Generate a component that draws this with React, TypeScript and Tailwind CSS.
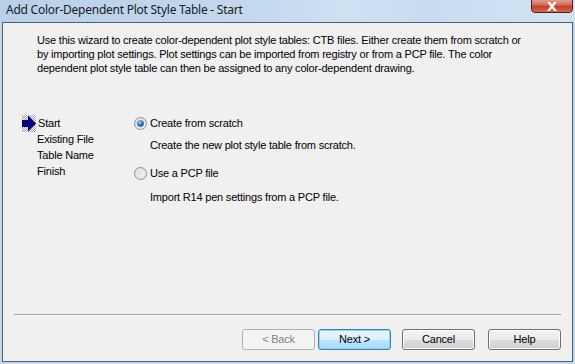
import React from "react";

function Radio({ checked }: { checked: boolean }) {
  return (
    <svg width="13" height="13" viewBox="0 0 13 13" className="shrink-0">
      <defs>
        <linearGradient id={checked ? "rg1" : "rg2"} x1="0" y1="0" x2="1" y2="1">
          <stop offset="0" stopColor="#d8d8d8" />
          <stop offset="1" stopColor="#f8f8f8" />
        </linearGradient>
        <radialGradient id="dot" cx="0.4" cy="0.35" r="0.7">
          <stop offset="0" stopColor="#a9e4fb" />
          <stop offset="0.45" stopColor="#2a8ad4" />
          <stop offset="1" stopColor="#0b3e74" />
        </radialGradient>
      </defs>
      <circle cx="6.5" cy="6.5" r="6" fill={`url(#${checked ? "rg1" : "rg2"})`} stroke="#8e8f8f" strokeWidth="1" />
      <circle cx="6.5" cy="6.5" r="4.3" fill="none" stroke="#e6e6e6" strokeWidth="1" />
      {checked && <circle cx="6.5" cy="6.5" r="3.3" fill="url(#dot)" />}
    </svg>
  );
}

function Arrow() {
  return (
    <svg width="15" height="17" viewBox="0 0 15 17" className="shrink-0">
      <defs>
        <pattern id="dith" width="2" height="2" patternUnits="userSpaceOnUse">
          <rect width="2" height="2" fill="#ffffff" />
          <rect width="1" height="1" fill="#a0a0a0" />
          <rect x="1" y="1" width="1" height="1" fill="#a0a0a0" />
        </pattern>
      </defs>
      <rect x="0" y="0" width="14" height="17" fill="url(#dith)" />
      <polygon points="0,5 6,5 6,0.5 14,8.5 6,16.5 6,12 0,12" fill="#000080" />
    </svg>
  );
}

function Btn({ label, kind }: { label: string; kind?: "disabled" | "default" }) {
  const base =
    "w-[73px] h-[21px] rounded-[3px] flex items-center justify-center text-[11px] border";
  if (kind === "disabled")
    return (
      <div className={`${base} border-[#adb2b5] bg-[#f4f4f4] text-[#838383]`}>{label}</div>
    );
  if (kind === "default")
    return (
      <div className={`${base} border-[#3c7fb1] bg-[linear-gradient(#eaf6fd_0%,#d9f0fc_50%,#bee6fd_51%,#a7d9f5_100%)] text-black shadow-[inset_0_0_0_1px_#8fd3f5]`}>
        {label}
      </div>
    );
  return (
    <div className={`${base} border-[#707070] bg-[linear-gradient(#f2f2f2_0%,#ebebeb_50%,#dddddd_51%,#cfcfcf_100%)] text-black shadow-[inset_0_0_0_1px_#fcfcfc]`}>
      {label}
    </div>
  );
}

export default function App() {
  return (
    <div
      className="w-[575px] h-[364px] relative overflow-hidden bg-[#c3d7ed] flex flex-col"
      style={{ fontFamily: '"Liberation Sans", Arial, sans-serif' }}
    >
      <div className="h-[22px] shrink-0 flex items-center pl-[6px] bg-[linear-gradient(90deg,#b9d0e9_0%,#c4d8ee_45%,#cfe0f1_60%,#c9dcef_75%,#d3e3f3_100%)]">
        <span
          className="text-[12px] text-[#1b1b1b] mt-[-2px] tracking-[-0.25px]"
          style={{ fontFamily: '"Noto Sans", "Open Sans", sans-serif' }}
        >
          Add Color-Dependent Plot Style Table - Start
        </span>
      </div>
      <div className="absolute left-[531px] top-[-2px] w-[42px] h-[15px] rounded-b-[4px] border border-[#5a1e16] bg-[linear-gradient(#e8a493_0%,#d0705c_45%,#c0412a_55%,#d06a4e_100%)] flex items-center justify-center">
        <span className="text-white text-[13px] font-bold leading-none mt-[1px]" style={{ fontFamily: '"DejaVu Sans", sans-serif' }}>
          X
        </span>
      </div>
      <div className="ml-[2px] w-[571px] h-[340px] border border-[#4f5e70] bg-[#f0f0f0] flex flex-col text-[11px] text-black tracking-[-0.2px]">
        <div className="pl-[34px] pt-[10px] leading-[14px] whitespace-nowrap">
          <div>Use this wizard to create color-dependent plot style tables: CTB files. Either create them from scratch or</div>
          <div>by importing plot settings. Plot settings can be imported from registry or from a PCP file. The color</div>
          <div>dependent plot style table can then be assigned to any color-dependent drawing.</div>
        </div>
        <div className="flex-1 flex pt-[40px] pl-[19px]">
          <div className="w-[112px] flex flex-col leading-[16px]">
            <div className="flex items-center h-[16px]">
              <Arrow />
              <span className="ml-[1px]">Start</span>
            </div>
            <div className="pl-[15px] h-[16px]">Existing File</div>
            <div className="pl-[15px] h-[16px]">Table Name</div>
            <div className="pl-[15px] h-[16px]">Finish</div>
          </div>
          <div className="flex flex-col leading-[14px]">
            <div className="flex items-center h-[16px] gap-[3px]">
              <Radio checked />
              <span>Create from scratch</span>
            </div>
            <div className="pl-[16px] mt-[7px]">Create the new plot style table from scratch.</div>
            <div className="flex items-center h-[16px] gap-[3px] mt-[13px]">
              <Radio checked={false} />
              <span>Use a PCP file</span>
            </div>
            <div className="pl-[16px] mt-[9px]">Import R14 pen settings from a PCP file.</div>
          </div>
        </div>
        <div className="mx-[11px] h-[2px] border-t border-[#a0a0a0] border-b border-b-white" />
        <div className="flex justify-end pr-[11px] mt-[13px] mb-[11px]">
          <Btn label="< Back" kind="disabled" />
          <div className="ml-[3px]">
            <Btn label="Next >" kind="default" />
          </div>
          <div className="ml-[11px]">
            <Btn label="Cancel" />
          </div>
          <div className="ml-[13px]">
            <Btn label="Help" />
          </div>
        </div>
      </div>
    </div>
  );
}
